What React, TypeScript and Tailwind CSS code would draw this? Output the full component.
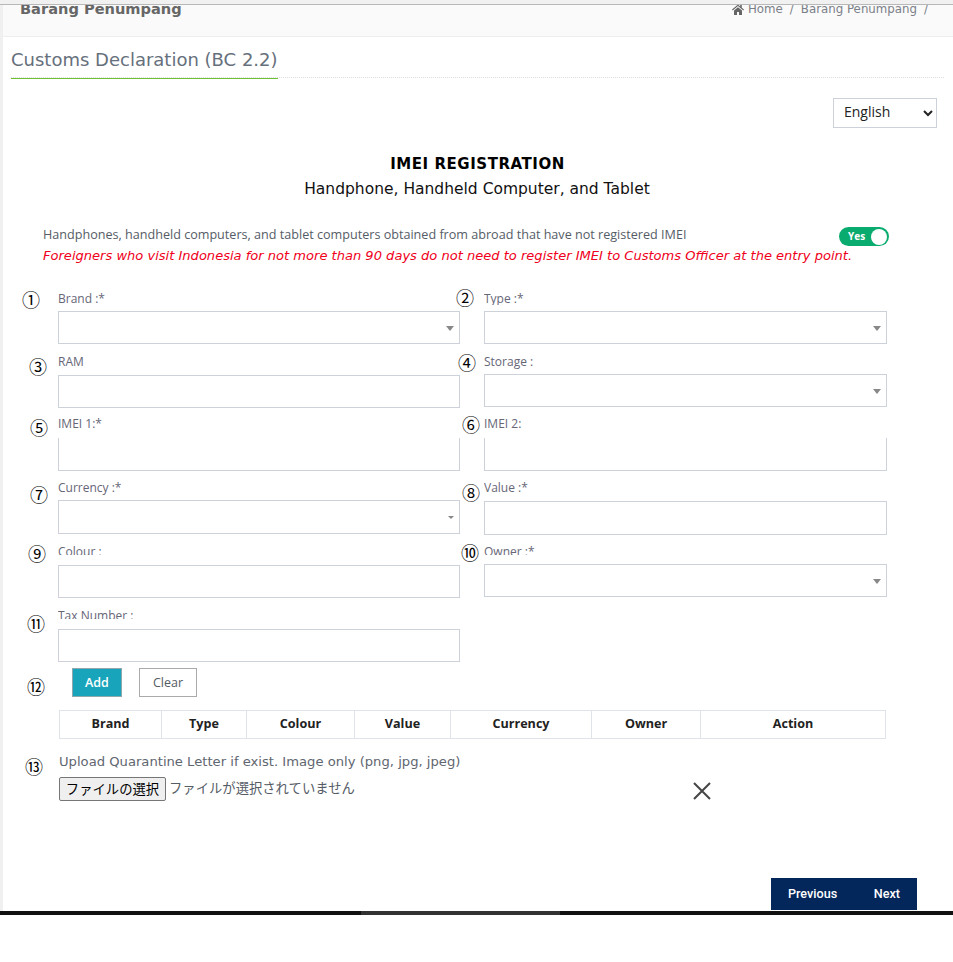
import React from "react";

const OPEN = "font-['Open_Sans',sans-serif]";
const DEJA = "font-['DejaVu_Sans',sans-serif]";

function Num({ g, className }: { g: string; className: string }) {
  return (
    <span className={"absolute flex h-4 w-4 items-center justify-center text-[18px] leading-4 text-black font-['Noto_Sans_CJK_JP',sans-serif] " + className}>
      {g}
    </span>
  );
}

function Field({
  g, numCls, label, wrapCls, labelCls, boxCls, select, small,
}: {
  g: string; numCls: string; label: string; wrapCls: string; labelCls: string; boxCls: string; select?: boolean; small?: boolean;
}) {
  return (
    <div className={"relative " + wrapCls}>
      <Num g={g} className={numCls} />
      <div className={"overflow-hidden text-[12px] leading-[14px] text-[#667] " + OPEN + " " + labelCls}>{label}</div>
      <div className={"relative w-full border border-[#cdd1d9] bg-white box-border " + boxCls}>
        {select && (
          <span className={small
            ? "absolute right-[5px] top-[15px] h-0 w-0 border-x-[3px] border-t-[3px] border-x-transparent border-t-[#888]"
            : "absolute right-[5px] top-[14px] h-0 w-0 border-x-[4px] border-t-[5px] border-x-transparent border-t-[#888]"} />
        )}
      </div>
    </div>
  );
}

const columns = [
  { t: "Brand", w: "w-[102px]" },
  { t: "Type", w: "w-[85px]" },
  { t: "Colour", w: "w-[108px]" },
  { t: "Value", w: "w-[96px]" },
  { t: "Currency", w: "w-[141px]" },
  { t: "Owner", w: "w-[109px]" },
  { t: "Action", w: "w-[185px]" },
];

export default function App() {
  return (
    <div className="h-[962px] w-[953px] overflow-hidden bg-white">
      <div className="h-[5px] border-b border-[#b8b8b8] bg-[#f1f1f1]" />
      <div className="h-[906px] border-l-[3px] border-[#f0f0f0]">
        {/* breadcrumb header */}
        <div className="flex h-[32px] justify-between overflow-hidden border-b border-[#eeeeee] bg-[#fafafa] pl-[17px] pr-[25px]">
          <div className={"-mt-[10px] text-[14.6px] font-bold leading-[28px] text-[#666] " + DEJA}>Barang Penumpang</div>
          <div className={"-mt-[10px] flex h-[28px] items-center gap-[7px] text-[11.8px] leading-[28px] text-[#7a8088] " + DEJA}>
            <svg width="12" height="11" viewBox="0 0 12 11" className="-mr-[3px]">
              <path d="M6 .5 0 5.6l.7.8L6 2l5.3 4.4.7-.8L9.8 3.8V1H8.2v1.4L6 .5ZM2 6.6V11h3V8h2v3h3V6.6L6 3.2 2 6.6Z" fill="#666" />
            </svg>
            <span>Home</span>
            <span>/</span>
            <span>Barang Penumpang</span>
            <span>/</span>
          </div>
        </div>

        <div className="px-[8px]">
          {/* tab */}
          <div className="mr-[1px] flex h-[41px] border-b border-dotted border-[#dddddd]">
            <div className={"h-[42px] border-b border-[#6cc230] text-[18px] leading-[46px] text-[#66707c] " + DEJA}>
              Customs Declaration (BC 2.2)
            </div>
          </div>

          <div className="mt-[20px] flex justify-end pr-[8px]">
            <select className={"h-[30px] w-[104px] border border-[#cdd1d9] bg-white pb-[3px] pl-[6px] text-[14px] text-[#222] outline-none " + OPEN}>
              <option>English</option>
            </select>
          </div>

          <div className={"mt-[26px] pr-[1px] text-center text-[15px] font-bold leading-[20px] tracking-[0.55px] text-black " + DEJA}>IMEI REGISTRATION</div>
          <div className={"mt-[5px] pr-[2px] text-center text-[15.5px] leading-[20px] text-[#111] " + DEJA}>
            Handphone, Handheld Computer, and Tablet
          </div>
        </div>

        {/* notice */}
        <div className="relative mt-[26px] pl-[40px]">
          <div className={"text-[12.6px] leading-[20px] text-[#555c66] " + OPEN}>
            Handphones, handheld computers, and tablet computers obtained from abroad that have not registered IMEI
          </div>
          <div className={"mt-[1px] text-[13.05px] italic leading-[20px] text-[#f00020] " + DEJA}>
            Foreigners who visit Indonesia for not more than 90 days do not need to register IMEI to Customs Officer at the entry point.
          </div>
          <div className="absolute left-[836px] top-[2px] flex h-[19px] w-[50px] items-center justify-between rounded-full bg-[#0aab6f] pl-[9px] pr-[2px]">
            <span className={"text-[10px] font-bold text-white " + OPEN}>Yes</span>
            <span className="h-4 w-4 rounded-full bg-white" />
          </div>
        </div>

        {/* form */}
        <div className="mt-[26px] flex pl-[55px]">
          <div className="w-[402px]">
            <Field g="①" numCls="left-[-35px] top-[-1px]" label="Brand :*" wrapCls="" labelCls="h-[11px] mb-[8px]" boxCls="h-[33px]" select />
            <Field g="③" numCls="left-[-28px] top-[3px]" label="RAM" wrapCls="mt-[11px]" labelCls="h-[14px] mb-[6px]" boxCls="h-[33px]" />
            <Field g="⑤" numCls="left-[-27px] top-[2px]" label="IMEI 1:*" wrapCls="mt-[9px]" labelCls="h-[14px] mb-[7px]" boxCls="h-[33px] border-t-0" />
            <Field g="⑦" numCls="left-[-27px] top-[5px]" label="Currency :*" wrapCls="mt-[10px]" labelCls="h-[14px] mb-[5px]" boxCls="h-[34px]" select small />
            <Field g="⑨" numCls="left-[-29px] top-0" label="Colour :" wrapCls="mt-[11px]" labelCls="h-[10px] mb-[10px]" boxCls="h-[33px]" />
            <Field g="⑪" numCls="left-[-30px] top-[6px]" label="Tax Number :" wrapCls="mt-[11px]" labelCls="h-[10px] mb-[10px]" boxCls="h-[33px]" />
          </div>
          <div className="ml-[24px] w-[403px]">
            <Field g="②" numCls="left-[-27px] top-[-3px]" label="Type :*" wrapCls="" labelCls="h-[13px] mb-[6px]" boxCls="h-[33px]" select />
            <Field g="④" numCls="left-[-25px] top-[-1px]" label="Storage :" wrapCls="mt-[11px]" labelCls="h-[14px] mb-[5px]" boxCls="h-[33px]" select />
            <Field g="⑥" numCls="left-[-21px] top-[-1px]" label="IMEI 2:" wrapCls="mt-[10px]" labelCls="h-[14px] mb-[7px]" boxCls="h-[33px] border-t-0" />
            <Field g="⑧" numCls="left-[-21px] top-[3px]" label="Value :*" wrapCls="mt-[10px]" labelCls="h-[14px] mb-[6px]" boxCls="h-[34px]" />
            <Field g="⑩" numCls="left-[-22px] top-[-1px]" label="Owner :*" wrapCls="mt-[10px]" labelCls="h-[10px] mb-[9px]" boxCls="h-[33px]" select />
          </div>
        </div>

        {/* buttons */}
        <div className={"relative ml-[55px] mt-[6px] flex gap-[17px] pl-[14px] " + OPEN}>
          <Num g="⑫" className="left-[-30px] top-[10px]" />
          <div className="flex h-[29px] w-[50px] items-center justify-center border border-[#8fa7ad] bg-[#18a5bb] pt-[1px] text-[12.5px] font-semibold text-white">Add</div>
          <div className="flex h-[29px] w-[58px] items-center justify-center border border-[#aaaaaa] bg-white pt-[1px] text-[12.5px] text-[#555c66]">Clear</div>
        </div>

        {/* table */}
        <table className={"ml-[56px] mt-[13px] w-[826px] table-fixed border-collapse " + OPEN}>
          <thead>
            <tr>
              {columns.map((c) => (
                <th key={c.t} className={"h-[28px] border border-[#e0e3e9] p-0 pb-[1px] text-center text-[12.6px] font-bold text-[#222] " + c.w}>
                  {c.t}
                </th>
              ))}
            </tr>
          </thead>
        </table>

        {/* upload */}
        <div className="relative ml-[56px] mt-[14px]">
          <Num g="⑬" className="left-[-33px] top-[5px]" />
          <div className={"text-[13.15px] leading-[18px] text-[#5f6670] " + DEJA}>Upload Quarantine Letter if exist. Image only (png, jpg, jpeg)</div>
          <div className="mt-[6px] flex items-start font-['Noto_Sans_CJK_JP',sans-serif] text-[13.33px]">
            <div className="flex h-[24px] w-[107px] items-center justify-center rounded-[2px] border border-[#767676] bg-[#efefef] leading-none text-black">ファイルの選択</div>
            <div className="ml-[3px] leading-[22px] text-[#555c66]">ファイルが選択されていません</div>
            <svg width="20" height="18" viewBox="0 0 20 18" className="ml-[337px] mt-[5px]">
              <path d="M2 1 18 17M18 1 2 17" stroke="#444" strokeWidth="2" fill="none" />
            </svg>
          </div>
        </div>

        {/* nav */}
        <div className="mr-[36px] mt-[77px] flex justify-end">
          <div className="flex h-[32px] w-[146px] items-center justify-between bg-[#03265b] px-[17px] font-['Roboto',sans-serif] text-[12.6px] font-medium text-white">
            <span>Previous</span>
            <span>Next</span>
          </div>
        </div>
      </div>
      <div className="flex h-[4px] bg-[#111111]">
        <div className="ml-[361px] w-[199px] bg-[#333333]" />
      </div>
    </div>
  );
}
